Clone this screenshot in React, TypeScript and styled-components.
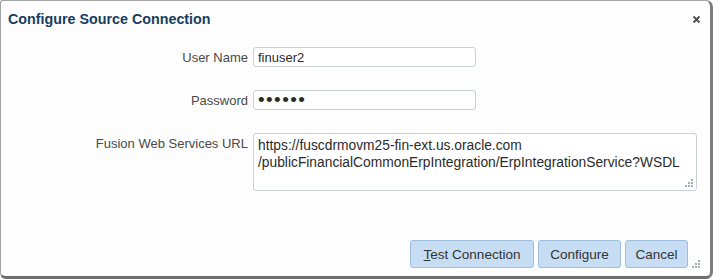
import React from 'react';
import styled, {createGlobalStyle} from 'styled-components';

const GlobalStyle = createGlobalStyle`
  html, body {
    margin: 0;
    padding: 0;
    background: #ffffff;
  }
  body {
    font-family: 'Liberation Sans', Arial, sans-serif;
  }
`;

const Dialog = styled.div`
  box-sizing: border-box;
  width: 713px;
  height: 279px;
  background: #fdfdfd;
  border: 1px solid #a3a3a3;
  border-right: 3px solid #7d7d7d;
  border-bottom: 3px solid #6e6e6e;
  border-radius: 3px 7px 7px 6px;
  display: flex;
  flex-direction: column;
  position: relative;
`;

const Header = styled.div`
  display: flex;
  align-items: center;
  justify-content: space-between;
  height: 35px;
  padding: 0 9px 0 7px;
`;

const Title = styled.h1`
  margin: 0;
  font-size: 14.3px;
  font-weight: bold;
  color: #173d5e;
`;

const Close = styled.button`
  border: 0;
  background: none;
  padding: 0;
  width: 9px;
  height: 9px;
  margin-top: 2px;
  display: flex;
  cursor: pointer;
`;

const Form = styled.div`
  display: grid;
  grid-template-columns: 240px 1fr;
  column-gap: 5px;
  row-gap: 23px;
  padding: 11px 13px 0 7px;
  align-items: center;
`;

const Label = styled.label<{$top?: boolean}>`
  font-size: 13px;
  color: #4a4a4a;
  text-align: right;
  align-self: ${({$top}) => ($top ? 'start' : 'center')};
  padding-top: ${({$top}) => ($top ? '3px' : '0')};
`;

const TextInput = styled.input<{$masked?: boolean}>`
  box-sizing: border-box;
  width: 223px;
  height: 20px;
  border: 1px solid #c9d0d8;
  border-radius: 3px;
  background: #ffffff;
  padding: 0 4px;
  font-family: 'Liberation Sans', Arial, sans-serif;
  font-size: ${({$masked}) => ($masked ? '19px' : '13px')};
  letter-spacing: ${({$masked}) => ($masked ? '1.4px' : '0')};
  color: #2b2b2b;
  outline: none;
`;

const AreaWrap = styled.div`
  position: relative;
  width: 444px;
  height: 58px;
`;

const TextArea = styled.textarea`
  box-sizing: border-box;
  width: 100%;
  height: 100%;
  border: 1px solid #c9d0d8;
  border-radius: 3px;
  background: #ffffff;
  padding: 3px 4px;
  font-family: 'Liberation Sans', Arial, sans-serif;
  font-size: 13.8px;
  line-height: 17px;
  color: #2b2b2b;
  resize: none;
  outline: none;
  overflow: hidden;
`;

const Grip = styled.svg`
  position: absolute;
  right: 3px;
  bottom: 3px;
`;

const Footer = styled.div`
  margin-top: auto;
  display: flex;
  justify-content: flex-end;
  gap: 4px;
  padding: 0 22px 8px 0;
`;

const Button = styled.button<{$w: number}>`
  box-sizing: border-box;
  width: ${({$w}) => $w}px;
  height: 28px;
  padding: 0;
  border: 1px solid #9fbedb;
  border-radius: 3px;
  background: #c6ddf4;
  font-family: 'Liberation Sans', Arial, sans-serif;
  font-size: 13.5px;
  color: #333333;
  cursor: pointer;
  u {
    text-decoration: underline;
  }
`;

const CornerGrip = styled.svg`
  position: absolute;
  right: 9px;
  bottom: 7px;
`;

const Dots = ({size}: {size: number}) => (
  <>
    {[
      [2, 0],
      [1, 1],
      [2, 1],
      [0, 2],
      [1, 2],
      [2, 2],
    ].map(([cx, cy], i) => (
      <rect key={i} x={cx * (size + 1)} y={cy * (size + 1)} width={size} height={size} fill="#a8aeb5" />
    ))}
  </>
);

export default function App() {
  const url =
    'https://fuscdrmovm25-fin-ext.us.oracle.com\n/publicFinancialCommonErpIntegration/ErpIntegrationService?WSDL';
  return (
    <>
      <GlobalStyle />
      <Dialog>
        <Header>
          <Title>Configure Source Connection</Title>
          <Close aria-label="Close">
            <svg width="9" height="9" viewBox="0 0 9 9">
              <path d="M1.5 1.5 L7.5 7.5 M7.5 1.5 L1.5 7.5" stroke="#4d4d4d" strokeWidth="1.8" />
            </svg>
          </Close>
        </Header>
        <Form>
          <Label>User Name</Label>
          <TextInput readOnly value="finuser2" />
          <Label>Password</Label>
          <TextInput readOnly $masked type="password" value="secret" />
          <Label $top>Fusion Web Services URL</Label>
          <AreaWrap>
            <TextArea readOnly value={url} />
            <Grip width="9" height="9" viewBox="0 0 9 9">
              <Dots size={2} />
            </Grip>
          </AreaWrap>
        </Form>
        <Footer>
          <Button $w={124}>
            <u>T</u>est Connection
          </Button>
          <Button $w={83}>Configure</Button>
          <Button $w={63}>Cancel</Button>
        </Footer>
        <CornerGrip width="9" height="9" viewBox="0 0 9 9">
          <Dots size={2} />
        </CornerGrip>
      </Dialog>
    </>
  );
}
